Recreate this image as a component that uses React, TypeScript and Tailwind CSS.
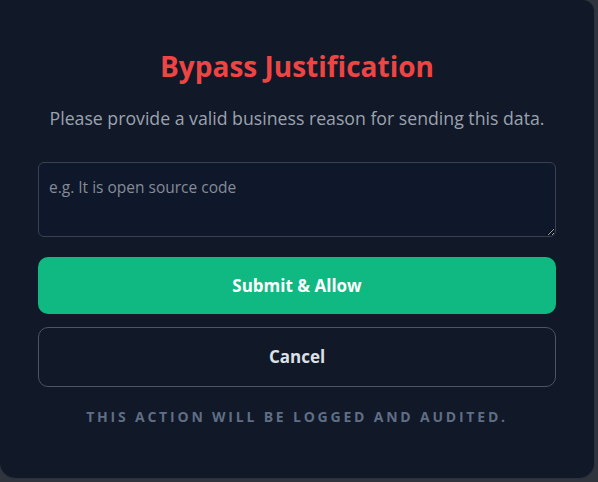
export default function App() {
  return (
    <div className="w-[598px] h-[482px] bg-[#2f343d] overflow-hidden" style={{ fontFamily: '"Open Sans", "Noto Sans", sans-serif' }}>
      <div className="w-[595px] h-[479px] bg-[#111827] rounded-b-2xl rounded-tr-xl border-r border-b border-[#2a3140] px-[38px] pt-[48px] flex flex-col">
        <h1 className="text-[28px] leading-[36px] font-bold text-[#ef4444] text-center">Bypass Justification</h1>
        <p className="mt-[22px] text-[17.7px] leading-[24px] text-[#9ca3af] text-center">
          Please provide a valid business reason for sending this data.
        </p>
        <textarea
          className="mt-[32px] h-[75px] w-full rounded-md border border-[#374151] bg-[#0f172a] px-[10px] pt-[13px] pb-[9px] text-[15.5px] text-gray-200 placeholder:text-[#858c97] outline-none"
          placeholder="e.g. It is open source code"
        />
        <button className="mt-[20px] h-[57px] w-full rounded-[10px] bg-[#10b981] text-[17px] font-bold text-white">
          Submit &amp; Allow
        </button>
        <button className="mt-[13px] h-[60px] w-full rounded-[10px] border border-[#4b5563] text-[17px] font-bold text-[#dde1e7]">
          Cancel
        </button>
        <p className="mt-[20px] text-[14px] leading-[20px] font-bold tracking-[0.2em] uppercase text-[#5f6e85] text-center">
          This action will be logged and audited.
        </p>
      </div>
    </div>
  );
}
